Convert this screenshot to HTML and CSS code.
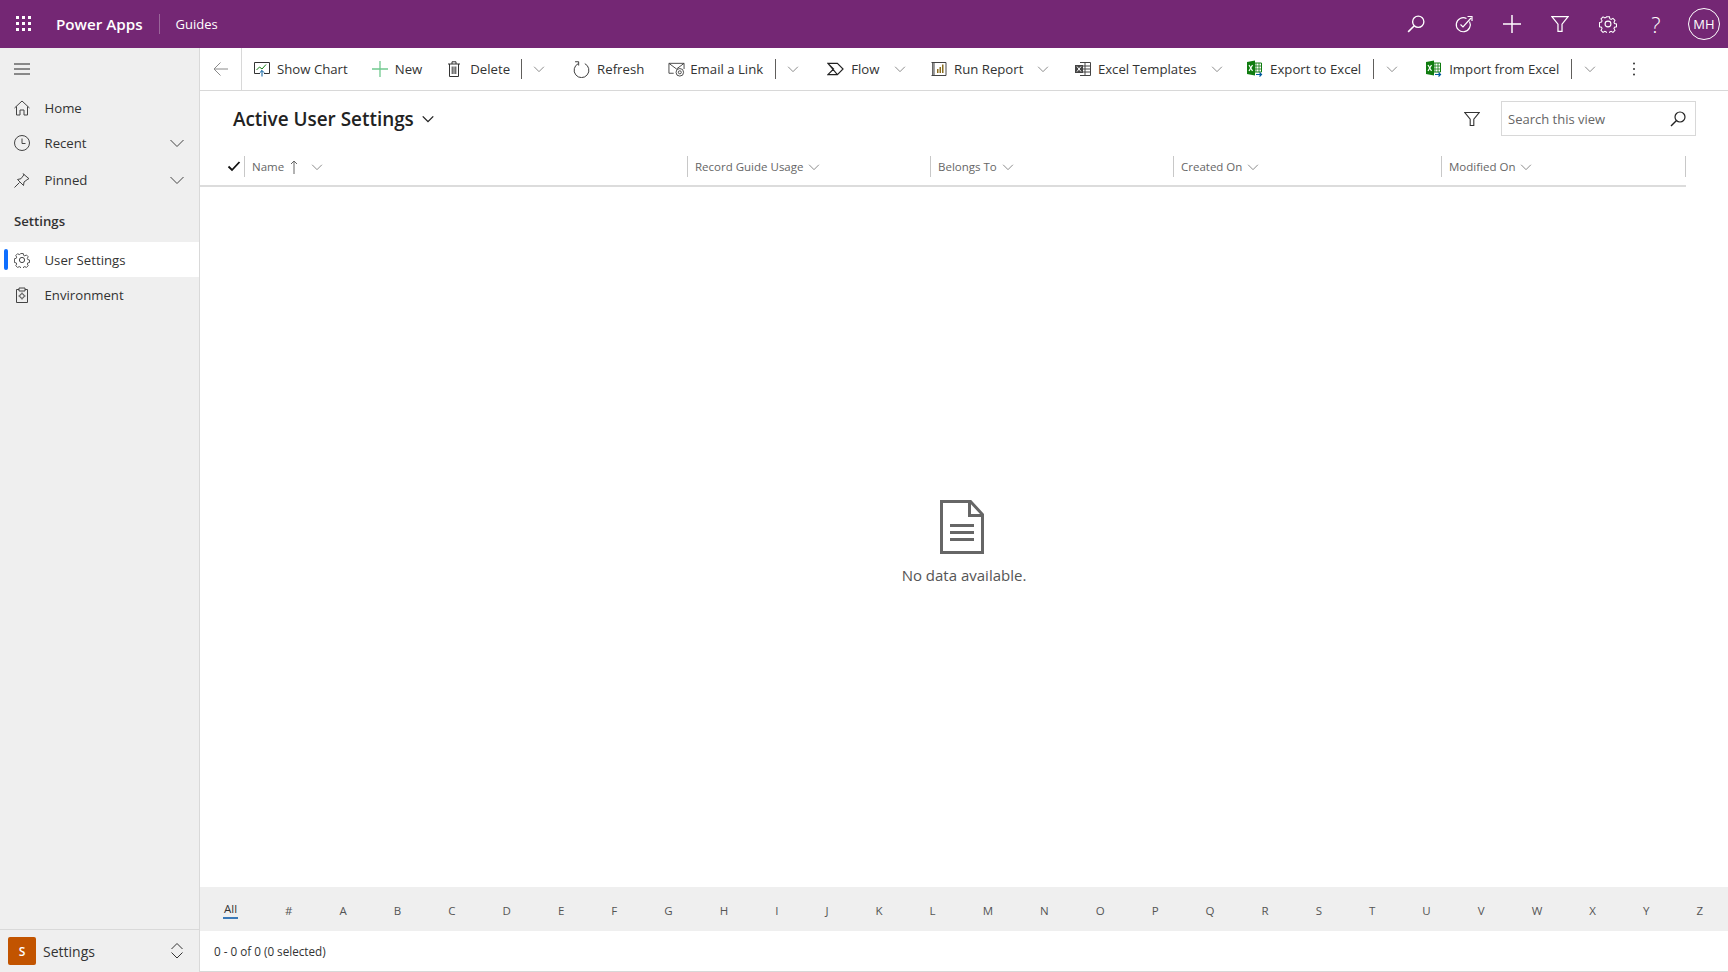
FILE: index.html
```html
<!DOCTYPE html>
<html lang="en">
<head>
    <meta charset="UTF-8">
    <title>Active User Settings - Power Apps</title>
    <link rel="stylesheet" href="styles.css">
</head>
<body>
    <svg class="sprite" xmlns="http://www.w3.org/2000/svg">
        <symbol id="i-chev" viewBox="0 0 16 16"><path d="M1.500 5l6.500 6.500L14.500 5" fill="none" stroke="currentColor"/></symbol>
        <symbol id="i-search" viewBox="0 0 16 16"><circle cx="10" cy="6" r="5" fill="none" stroke="currentColor" stroke-width="1.200"/><path d="M6.500 9.500L1 15" fill="none" stroke="currentColor" stroke-width="1.400"/></symbol>
        <symbol id="i-filter" viewBox="0 0 16 16"><path d="M.8 1.500h14.400L9.800 8.200v6.300H6.200V8.200z" fill="none" stroke="currentColor" stroke-width="1.100"/></symbol>
        <symbol id="i-gear" viewBox="0 0 16 16"><g fill="none" stroke="currentColor"><circle cx="8" cy="8" r="2.600"/><path d="M6.600 .8h2.800l.4 2 1.300.6 1.800-1 2 2-1 1.800.5 1.300 2 .5v2.800l-2 .4-.5 1.300 1 1.800-2 2-1.800-1-1.300.5-.4 2H6.600l-.4-2-1.300-.5-1.800 1-2-2 1-1.800-.5-1.300-2-.4V6.600l2-.5.5-1.300-1-1.800 2-2 1.800 1 1.300-.6z" transform="translate(.8 .8) scale(.9)"/></g></symbol>
        <symbol id="i-show-chart" viewBox="0 0 16 16"><path d="M6 12.500H.5V1.500h15v11H10" fill="none" stroke="#333"/><path d="M2.500 9l3-3 2.500 2 4-4.500" fill="none" stroke="#107c10"/><path d="M8 15.500V9.500M5.800 11.700L8 9.500l2.200 2.200" fill="none" stroke="#005a9e"/></symbol>
        <symbol id="i-trash" viewBox="0 0 16 16"><path d="M2 3h12M3.500 3v12.500h9V3M6 3V.8h4V3M6.200 5.500v7.500M8 5.500v7.500M9.800 5.500v7.500" fill="none" stroke="#333"/></symbol>
        <symbol id="i-refresh" viewBox="0 0 18 18"><path d="M5.500 2.800a7.800 7.800 0 1 0 7 0" fill="none" stroke="#333"/><path d="M2.200 .8h3.800v4" fill="none" stroke="#333"/></symbol>
        <symbol id="i-email" viewBox="0 0 18 16"><path d="M6 12.500H1V2h16v6M1 2l8 6 8-6" fill="none" stroke="#444"/><circle cx="12.500" cy="11.500" r="4" fill="none" stroke="#444"/><circle cx="12.500" cy="11.500" r="1.600" fill="none" stroke="#444"/></symbol>
        <symbol id="i-flow" viewBox="0 0 18 16"><path d="M1 2h10l6 6-6 6H1l6-6zM1 2l10 12M1 14L7 8" fill="none" stroke="#222" stroke-width="1.200"/></symbol>
        <symbol id="i-report" viewBox="0 0 16 16"><path d="M3 1.500h12v13H3z" fill="none" stroke="#444"/><path d="M.5 1.500H3M.5 14.500H3M1.700 1.500v13" fill="none" stroke="#444"/><path d="M6 8h1.500v4H6zM8.500 6H10v6H8.500zM11 3.500h1.500V12H11z" fill="#8a6d1f"/></symbol>
        <symbol id="i-templates" viewBox="0 0 16 16"><path d="M5 1.500h10.500v13H5M5.500 5h10M5.500 8h10M5.500 11h10M10 1.500v13" fill="none" stroke="#444"/><rect x="0" y="4" width="8" height="8" fill="#444"/><path d="M2 5.500l4 5M6 5.500l-4 5" fill="none" stroke="#fff"/></symbol>
        <symbol id="i-excel" viewBox="0 0 16 18"><path d="M7 3h7.500v9H7" fill="none" stroke="#107c10"/><path d="M9 3v9M12 3v9M7 6h7.500M7 9h7.500" fill="none" stroke="#107c10" stroke-width=".8"/><path d="M0 2l8-1.500v15L0 14z" fill="#107c10"/><path d="M2 5l3.500 6M5.500 5L2 11" fill="none" stroke="#fff" stroke-width="1.200"/><path d="M9 14.500h5.500M12.500 12.500l2 2-2 2" fill="none" stroke="#005a9e" stroke-width="1.200"/></symbol>
    </svg>

    <header class="topbar">
        <svg class="waffle" width="16" height="16" viewBox="0 0 16 16" fill="#fff">
            <rect x="0" y="0" width="3" height="3"/><rect x="6" y="0" width="3" height="3"/><rect x="12" y="0" width="3" height="3"/>
            <rect x="0" y="6" width="3" height="3"/><rect x="6" y="6" width="3" height="3"/><rect x="12" y="6" width="3" height="3"/>
            <rect x="0" y="12" width="3" height="3"/><rect x="6" y="12" width="3" height="3"/><rect x="12" y="12" width="3" height="3"/>
        </svg>
        <span class="brand">Power Apps</span>
        <span class="app-name">Guides</span>
        <div class="top-actions">
            <span class="top-btn"><svg width="18" height="18"><use href="#i-search"/></svg></span>
            <span class="top-btn"><svg width="18" height="18" viewBox="0 0 18 18" fill="none" stroke="currentColor" stroke-width="1.200"><path d="M14.500 6.500a7 7 0 1 1-3-3"/><path d="M5.500 9.500l2.500 2.500 8-9M12.500 1.500h4.500v4.500"/></svg></span>
            <span class="top-btn"><svg width="18" height="18" viewBox="0 0 16 16" fill="none" stroke="currentColor" stroke-width="1.300"><path d="M8 0v16M0 8h16"/></svg></span>
            <span class="top-btn"><svg width="18" height="18"><use href="#i-filter"/></svg></span>
            <span class="top-btn"><svg width="18" height="18"><use href="#i-gear"/></svg></span>
            <span class="top-btn help">?</span>
            <span class="top-btn"><span class="avatar">MH</span></span>
        </div>
    </header>

    <div class="app-body">
        <aside class="sidenav">
            <div class="hamburger">
                <svg width="16" height="16" viewBox="0 0 16 16" stroke="#222"><path d="M0 3h16M0 8h16M0 13h16"/></svg>
            </div>
            <a class="nav-item">
                <svg width="16" height="16" viewBox="0 0 16 16" fill="none" stroke="#444"><path d="M.5 8L8 1l7.500 7M2.500 6.500v8.500h3.500v-5h4v5h3.500V6.500"/></svg>
                <span>Home</span>
            </a>
            <a class="nav-item">
                <svg width="16" height="16" viewBox="0 0 16 16" fill="none" stroke="#444"><circle cx="8" cy="8" r="7.500"/><path d="M8 3.500V8.500H11.500"/></svg>
                <span>Recent</span>
                <svg class="nav-chev" width="16" height="16"><use href="#i-chev"/></svg>
            </a>
            <a class="nav-item nav-pinned">
                <svg width="16" height="16" viewBox="0 0 16 16" fill="none" stroke="#444"><path d="M.5 15.500l5-5M3.500 7.500l3.500-.8 3-4-1-1 6 5-1 .3-4 3-.5 3.500z"/></svg>
                <span>Pinned</span>
                <svg class="nav-chev" width="16" height="16"><use href="#i-chev"/></svg>
            </a>
            <div class="nav-group">Settings</div>
            <a class="nav-item active">
                <svg width="16" height="16"><use href="#i-gear"/></svg>
                <span>User Settings</span>
            </a>
            <a class="nav-item">
                <svg width="16" height="16" viewBox="0 0 16 16" fill="none" stroke="#444"><path d="M5 2.500H2.500v13h11v-13H11M5 1h6v3H5z"/><circle cx="8" cy="9" r="2.200"/><path d="M8 5.500v1.200M8 11.300v1.200M4.500 9h1.200M10.300 9h1.200"/></svg>
                <span>Environment</span>
            </a>
            <div class="area-switch">
                <span class="area-tile">S</span>
                <span class="area-name">Settings</span>
                <svg width="16" height="24" viewBox="0 0 16 24" fill="none" stroke="#333"><path d="M2.500 10L8 4.500 13.500 10M2.500 13.500L8 19l5.500-5.500"/></svg>
            </div>
        </aside>

        <main class="content">
            <div class="commandbar">
                <span class="back">
                    <svg width="16" height="16" viewBox="0 0 16 16" fill="none" stroke="#8a8a8a"><path d="M15 8H1M7.500 1.500L1 8l6.500 6.500"/></svg>
                </span>
                <div class="cmd-list">
                    <span class="cmd"><svg width="16" height="16"><use href="#i-show-chart"/></svg>Show Chart</span>
                    <span class="cmd"><svg width="16" height="16" viewBox="0 0 16 16" stroke="#70c98f" stroke-width="1.300"><path d="M8 0v16M0 8h16"/></svg>New</span>
                    <span class="cmd cmd-split cmd-delete"><svg width="16" height="16"><use href="#i-trash"/></svg>Delete</span>
                    <span class="cmd-chev"><svg width="12" height="12"><use href="#i-chev"/></svg></span>
                    <span class="cmd"><svg width="17" height="17"><use href="#i-refresh"/></svg>Refresh</span>
                    <span class="cmd cmd-split cmd-tight"><svg width="17" height="16"><use href="#i-email"/></svg>Email a Link</span>
                    <span class="cmd-chev"><svg width="12" height="12"><use href="#i-chev"/></svg></span>
                    <span class="cmd"><svg width="17" height="16"><use href="#i-flow"/></svg>Flow<svg class="tail" width="12" height="12"><use href="#i-chev"/></svg></span>
                    <span class="cmd"><svg width="16" height="16"><use href="#i-report"/></svg>Run Report<svg class="tail" width="12" height="12"><use href="#i-chev"/></svg></span>
                    <span class="cmd"><svg width="16" height="16"><use href="#i-templates"/></svg>Excel Templates<svg class="tail snug" width="12" height="12"><use href="#i-chev"/></svg></span>
                    <span class="cmd cmd-split"><svg width="16" height="18"><use href="#i-excel"/></svg>Export to Excel</span>
                    <span class="cmd-chev wide"><svg width="12" height="12"><use href="#i-chev"/></svg></span>
                    <span class="cmd cmd-split"><svg width="16" height="18"><use href="#i-excel"/></svg>Import from Excel</span>
                    <span class="cmd-chev wide"><svg width="12" height="12"><use href="#i-chev"/></svg></span>
                    <span class="cmd-more"><svg width="4" height="14" viewBox="0 0 4 14" fill="#333"><circle cx="2" cy="1.500" r="1"/><circle cx="2" cy="7" r="1"/><circle cx="2" cy="12.500" r="1"/></svg></span>
                </div>
            </div>

            <div class="view-head">
                <h1 class="view-title">Active User Settings
                    <svg width="14" height="14" viewBox="0 0 16 16" fill="none" stroke="#222" stroke-width="1.600"><path d="M2 5l6 6 6-6"/></svg>
                </h1>
                <svg class="view-filter" width="16" height="16"><use href="#i-filter"/></svg>
                <div class="search-box">
                    <span>Search this view</span>
                    <svg width="16" height="16"><use href="#i-search"/></svg>
                </div>
            </div>

            <div class="grid-head">
                <div class="col-check"><svg width="14" height="14" viewBox="0 0 14 14" fill="none" stroke="#111" stroke-width="1.800"><path d="M1.500 7.500l3.500 3.500 7.500-8"/></svg></div>
                <div class="col">Name
                    <svg class="sort" width="8" height="14" viewBox="0 0 8 14" fill="none" stroke="#666"><path d="M4 14V1M1 4l3-3 3 3"/></svg>
                    <svg class="col-chev" width="12" height="12"><use href="#i-chev"/></svg>
                </div>
                <div class="col">Record Guide Usage <svg width="12" height="12"><use href="#i-chev"/></svg></div>
                <div class="col">Belongs To <svg width="12" height="12"><use href="#i-chev"/></svg></div>
                <div class="col">Created On <svg width="12" height="12"><use href="#i-chev"/></svg></div>
                <div class="col">Modified On <svg width="12" height="12"><use href="#i-chev"/></svg></div>
            </div>

            <div class="empty">
                <svg width="44" height="54" viewBox="0 0 44 54" fill="none" stroke="#666" stroke-width="3">
                    <path d="M1.500 1.500h29l12 13v38h-41z"/>
                    <path d="M29.500 1.500v14h13"/>
                    <path d="M10 25.500h24M10 32.500h24M10 39.500h24"/>
                </svg>
                <p>No data available.</p>
            </div>

            <div class="alpha">
                <span class="current">All</span><span>#</span><span>A</span><span>B</span><span>C</span><span>D</span><span>E</span><span>F</span><span>G</span><span>H</span><span>I</span><span>J</span><span>K</span><span>L</span><span>M</span><span>N</span><span>O</span><span>P</span><span>Q</span><span>R</span><span>S</span><span>T</span><span>U</span><span>V</span><span>W</span><span>X</span><span>Y</span><span>Z</span>
            </div>
            <div class="status">0 - 0 of 0 (0 selected)</div>
        </main>
    </div>
</body>
</html>
```

FILE: styles.css
```css
* {
    margin: 0;
    padding: 0;
    box-sizing: border-box;
    font-family: "Open Sans", "Noto Sans", Arial, sans-serif;
}
html, body {
    height: 100%;
    overflow: hidden;
}
body {
    display: flex;
    flex-direction: column;
    color: #333;
    background-color: #fff;
}
svg {
    flex-shrink: 0;
}
.sprite {
    display: none;
}

/* top bar */
.topbar {
    height: 48px;
    background-color: #742774;
    color: #fff;
    display: flex;
    align-items: center;
    padding-left: 16px;
}
.brand {
    margin-left: 24px;
    padding-right: 16px;
    font-size: 15.200px;
    font-weight: 600;
}
.app-name {
    border-left: 1px solid #9a659a;
    padding-left: 16px;
    line-height: 20px;
    font-size: 13px;
}
.top-actions {
    display: flex;
    margin-left: auto;
}
.top-btn {
    width: 48px;
    height: 48px;
    display: flex;
    align-items: center;
    justify-content: center;
}
.help {
    font-size: 22px;
    font-weight: 300;
}
.avatar {
    width: 32px;
    height: 32px;
    border: 1px solid #fff;
    border-radius: 50%;
    display: flex;
    align-items: center;
    justify-content: center;
    font-size: 13px;
}

.app-body {
    flex: 1;
    display: flex;
    min-height: 0;
}

/* left nav */
.sidenav {
    width: 200px;
    background-color: #efefef;
    border-right: 1px solid #d9d9d9;
    display: flex;
    flex-direction: column;
    font-size: 13.200px;
}
.hamburger {
    height: 42px;
    display: flex;
    align-items: center;
    padding-left: 14px;
}
.nav-item {
    height: 35px;
    display: flex;
    align-items: center;
    gap: 14.500px;
    padding: 0 14px;
    position: relative;
}
.nav-item svg {
    color: #444;
}
.nav-pinned {
    margin-top: 2px;
}
.nav-chev {
    margin-left: auto;
}
.nav-group {
    height: 44px;
    padding: 14px 0 0 14px;
    font-weight: 600;
    margin-top: 1px;
}
.nav-item.active {
    background-color: #fff;
}
.nav-item.active::before {
    content: "";
    position: absolute;
    left: 4px;
    top: 7px;
    width: 4px;
    height: 21px;
    border-radius: 2px;
    background-color: #0f6fff;
}
.area-switch {
    margin-top: auto;
    height: 43px;
    border-top: 1px solid #d9d9d9;
    display: flex;
    align-items: center;
    padding: 0 14px 0 8px;
}
.area-tile {
    width: 28px;
    height: 28px;
    border-radius: 2px;
    background-color: #c25400;
    color: #fff;
    font-size: 12px;
    font-weight: 600;
    display: flex;
    align-items: center;
    justify-content: center;
}
.area-name {
    margin-left: 7px;
    flex: 1;
    font-size: 14px;
}

/* main */
.content {
    flex: 1;
    min-width: 0;
    display: flex;
    flex-direction: column;
}
.commandbar {
    height: 43px;
    border-bottom: 1px solid #d8d8d8;
    display: flex;
    align-items: stretch;
}
.back {
    width: 42px;
    border-right: 1px solid #d8d8d8;
    display: flex;
    align-items: center;
    padding-left: 13px;
}
.cmd-list {
    display: flex;
    align-items: center;
    font-size: 13.200px;
    color: #333;
}
.cmd {
    display: flex;
    align-items: center;
    gap: 7px;
    padding: 0 12px;
    white-space: nowrap;
}
.cmd-split {
    position: relative;
    padding-right: 13px;
}
.cmd-split::after {
    content: "";
    position: absolute;
    right: 0;
    top: -1px;
    bottom: -1px;
    border-right: 1px solid #605e5c;
}
.cmd-delete {
    gap: 8px;
    padding-right: 12px;
}
.cmd-tight {
    gap: 5px;
}
.cmd svg {
    color: #666;
}
.cmd .tail {
    margin-left: 7px;
    margin-right: 1.500px;
}
.cmd .tail.snug {
    margin-right: .5px;
}
.cmd-chev {
    width: 39px;
    padding-right: 5px;
    display: flex;
    justify-content: center;
    color: #666;
}
.cmd-chev.wide {
    width: 40px;
}
.cmd-more {
    margin-left: 20px;
    display: flex;
}

.view-head {
    height: 65px;
    display: flex;
    align-items: center;
    padding: 0 32px 10px 33px;
}
.view-title {
    font-size: 18.900px;
    font-weight: 600;
    color: #222;
    display: flex;
    align-items: center;
    gap: 7px;
}
.view-filter {
    margin-left: auto;
    margin-right: 21px;
    color: #333;
}
.search-box {
    width: 195px;
    height: 35px;
    border: 1px solid #d8d8d8;
    display: flex;
    align-items: center;
    justify-content: space-between;
    padding: 0 9px 0 6px;
    font-size: 13px;
    color: #666;
}
.search-box svg {
    color: #222;
}

.grid-head {
    width: 1486px;
    height: 31px;
    padding-left: 27px;
    border-bottom: 2px solid #dcdcdc;
    display: grid;
    grid-template-columns: 17px 443px 243px 243px 268px 245px;
    align-items: start;
    font-size: 11.500px;
    color: #666;
}
.col-check {
    padding-top: 3px;
    height: 21px;
}
.col {
    height: 21px;
    border-left: 1px solid #c8c8c8;
    padding-left: 7px;
    display: flex;
    align-items: center;
    gap: 5px;
}
.col:last-child {
    border-right: 1px solid #c8c8c8;
}
.col svg {
    color: #666;
}
.col .sort {
    margin-left: 1px;
}
.col .col-chev {
    margin-left: 8px;
}

.empty {
    flex: 1;
    display: flex;
    flex-direction: column;
    align-items: center;
    padding-top: 313px;
}
.empty svg {
    margin-right: 4px;
}
.empty p {
    margin-top: 11px;
    font-size: 15px;
    color: #555;
}

.alpha {
    height: 44px;
    padding: 2px 25px 0 23px;
    background-color: #efefef;
    display: flex;
    justify-content: space-between;
    align-items: center;
    font-size: 11.500px;
    color: #555;
}
.alpha .current {
    color: #333;
    border-bottom: 2px solid #3b79b7;
    line-height: 16px;
    padding: 0 1px;
}
.status {
    height: 41px;
    border-bottom: 1px solid #d8d8d8;
    display: flex;
    align-items: center;
    padding-left: 14px;
    font-size: 11.700px;
}
```
